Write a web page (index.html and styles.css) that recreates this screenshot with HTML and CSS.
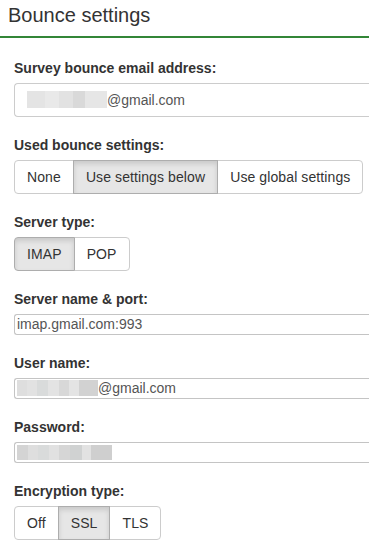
FILE: index.html
```html
<!DOCTYPE html>
<html>
<head>
    <meta name="viewport" content="width=device-width, initial-scale=1">
    <link rel="stylesheet" href="styles.css">
</head>

<body>
    <div class="panel">
        <h2 class="panel-title">Bounce settings</h2>

        <div class="form">
            <div class="field">
                <label class="field-label">Survey bounce email address:</label>
                <div class="text-box text-box-large"><span class="redacted redacted-email"></span>@gmail.com</div>
            </div>

            <div class="field">
                <label class="field-label">Used bounce settings:</label>
                <div class="btn-group">
                    <button type="button" class="btn">None</button>
                    <button type="button" class="btn active">Use settings below</button>
                    <button type="button" class="btn">Use global settings</button>
                </div>
            </div>

            <div class="field">
                <label class="field-label">Server type:</label>
                <div class="btn-group">
                    <button type="button" class="btn active">IMAP</button>
                    <button type="button" class="btn">POP</button>
                </div>
            </div>

            <div class="field">
                <label class="field-label">Server name &amp; port:</label>
                <div class="text-box">imap.gmail.com:993</div>
            </div>

            <div class="field">
                <label class="field-label">User name:</label>
                <div class="text-box"><span class="redacted redacted-user"></span>@gmail.com</div>
            </div>

            <div class="field">
                <label class="field-label">Password:</label>
                <div class="text-box"><span class="redacted redacted-password"></span></div>
            </div>

            <div class="field">
                <label class="field-label">Encryption type:</label>
                <div class="btn-group">
                    <button type="button" class="btn">Off</button>
                    <button type="button" class="btn active">SSL</button>
                    <button type="button" class="btn">TLS</button>
                </div>
            </div>
        </div>
    </div>
</body>
</html>
```

FILE: styles.css
```css
* {
    box-sizing: border-box;
}

body {
    margin: 0;
    font-family: 'Liberation Sans', Arial, sans-serif;
    font-size: 14px;
    color: #333;
    background: #fff;
    overflow: hidden;
}

.panel-title {
    margin: 0;
    padding: 3px 8px 9px;
    font-size: 20px;
    font-weight: normal;
    line-height: 24px;
    color: #333;
    border-bottom: 2px solid #328637;
}

.form {
    padding: 20px 0 0 14px;
}

.field {
    margin-bottom: 18px;
}

.field-label {
    display: block;
    margin-bottom: 5px;
    font-weight: bold;
    line-height: 20px;
}

/* Read-only boxes that look like inputs; they run on past the right edge */
.text-box {
    height: 21px;
    padding: 0 2px;
    border: 1px solid #c4c4c4;
    border-right: none;
    border-radius: 3px 0 0 3px;
    line-height: 19px;
    color: #555;
    white-space: nowrap;
    overflow: hidden;
}

.text-box-large {
    height: 34px;
    padding: 6px 12px;
    border-color: #ccc;
    border-radius: 4px 0 0 4px;
    line-height: 20px;
}

/* Blurred-out parts of the address */
.redacted {
    display: inline-block;
    vertical-align: top;
    margin-top: 1px;
    height: 17px;
}

.redacted-email {
    width: 80px;
    background: linear-gradient(to right, #e4e4e4 0 22%, #e9e9e9 22% 40%, #e2e2e2 40% 58%, #d9d9d9 58% 72%, #e6e6e6 72% 100%);
}

.redacted-user {
    width: 81px;
    height: 16px;
    background: linear-gradient(to right, #dedede 0 12%, #e2e2e2 12% 25%, #d9dbdb 25% 38%, #e3e3e3 38% 52%, #d8d8d8 52% 64%, #e4e4e4 64% 76%, #d2d2d2 76% 100%);
}

.redacted-password {
    width: 95px;
    height: 15px;
    margin-top: 2px;
    background: linear-gradient(to right, #d4d4d4 0 12%, #dedede 12% 22%, #d9dbdb 22% 34%, #e1e1e1 34% 44%, #d6d6d6 44% 56%, #d0d2d2 56% 68%, #e2e2e2 68% 78%, #cfcfcf 78% 100%);
}

.btn-group {
    display: inline-flex;
}

.btn {
    margin: 0 0 0 -1px;
    padding: 6px 12px;
    border: 1px solid #ccc;
    border-radius: 0;
    background: #fff;
    font-family: inherit;
    font-size: 14px;
    line-height: 20px;
    letter-spacing: 0.1px;
    color: #333;
    cursor: pointer;
}

.btn:first-child {
    margin-left: 0;
    border-radius: 4px 0 0 4px;
}

.btn:last-child {
    border-radius: 0 4px 4px 0;
}

.btn.active {
    position: relative;
    z-index: 1;
    background: #e6e6e6;
    border-color: #adadad;
    box-shadow: inset 0 3px 5px rgba(0, 0, 0, 0.125);
}
```
